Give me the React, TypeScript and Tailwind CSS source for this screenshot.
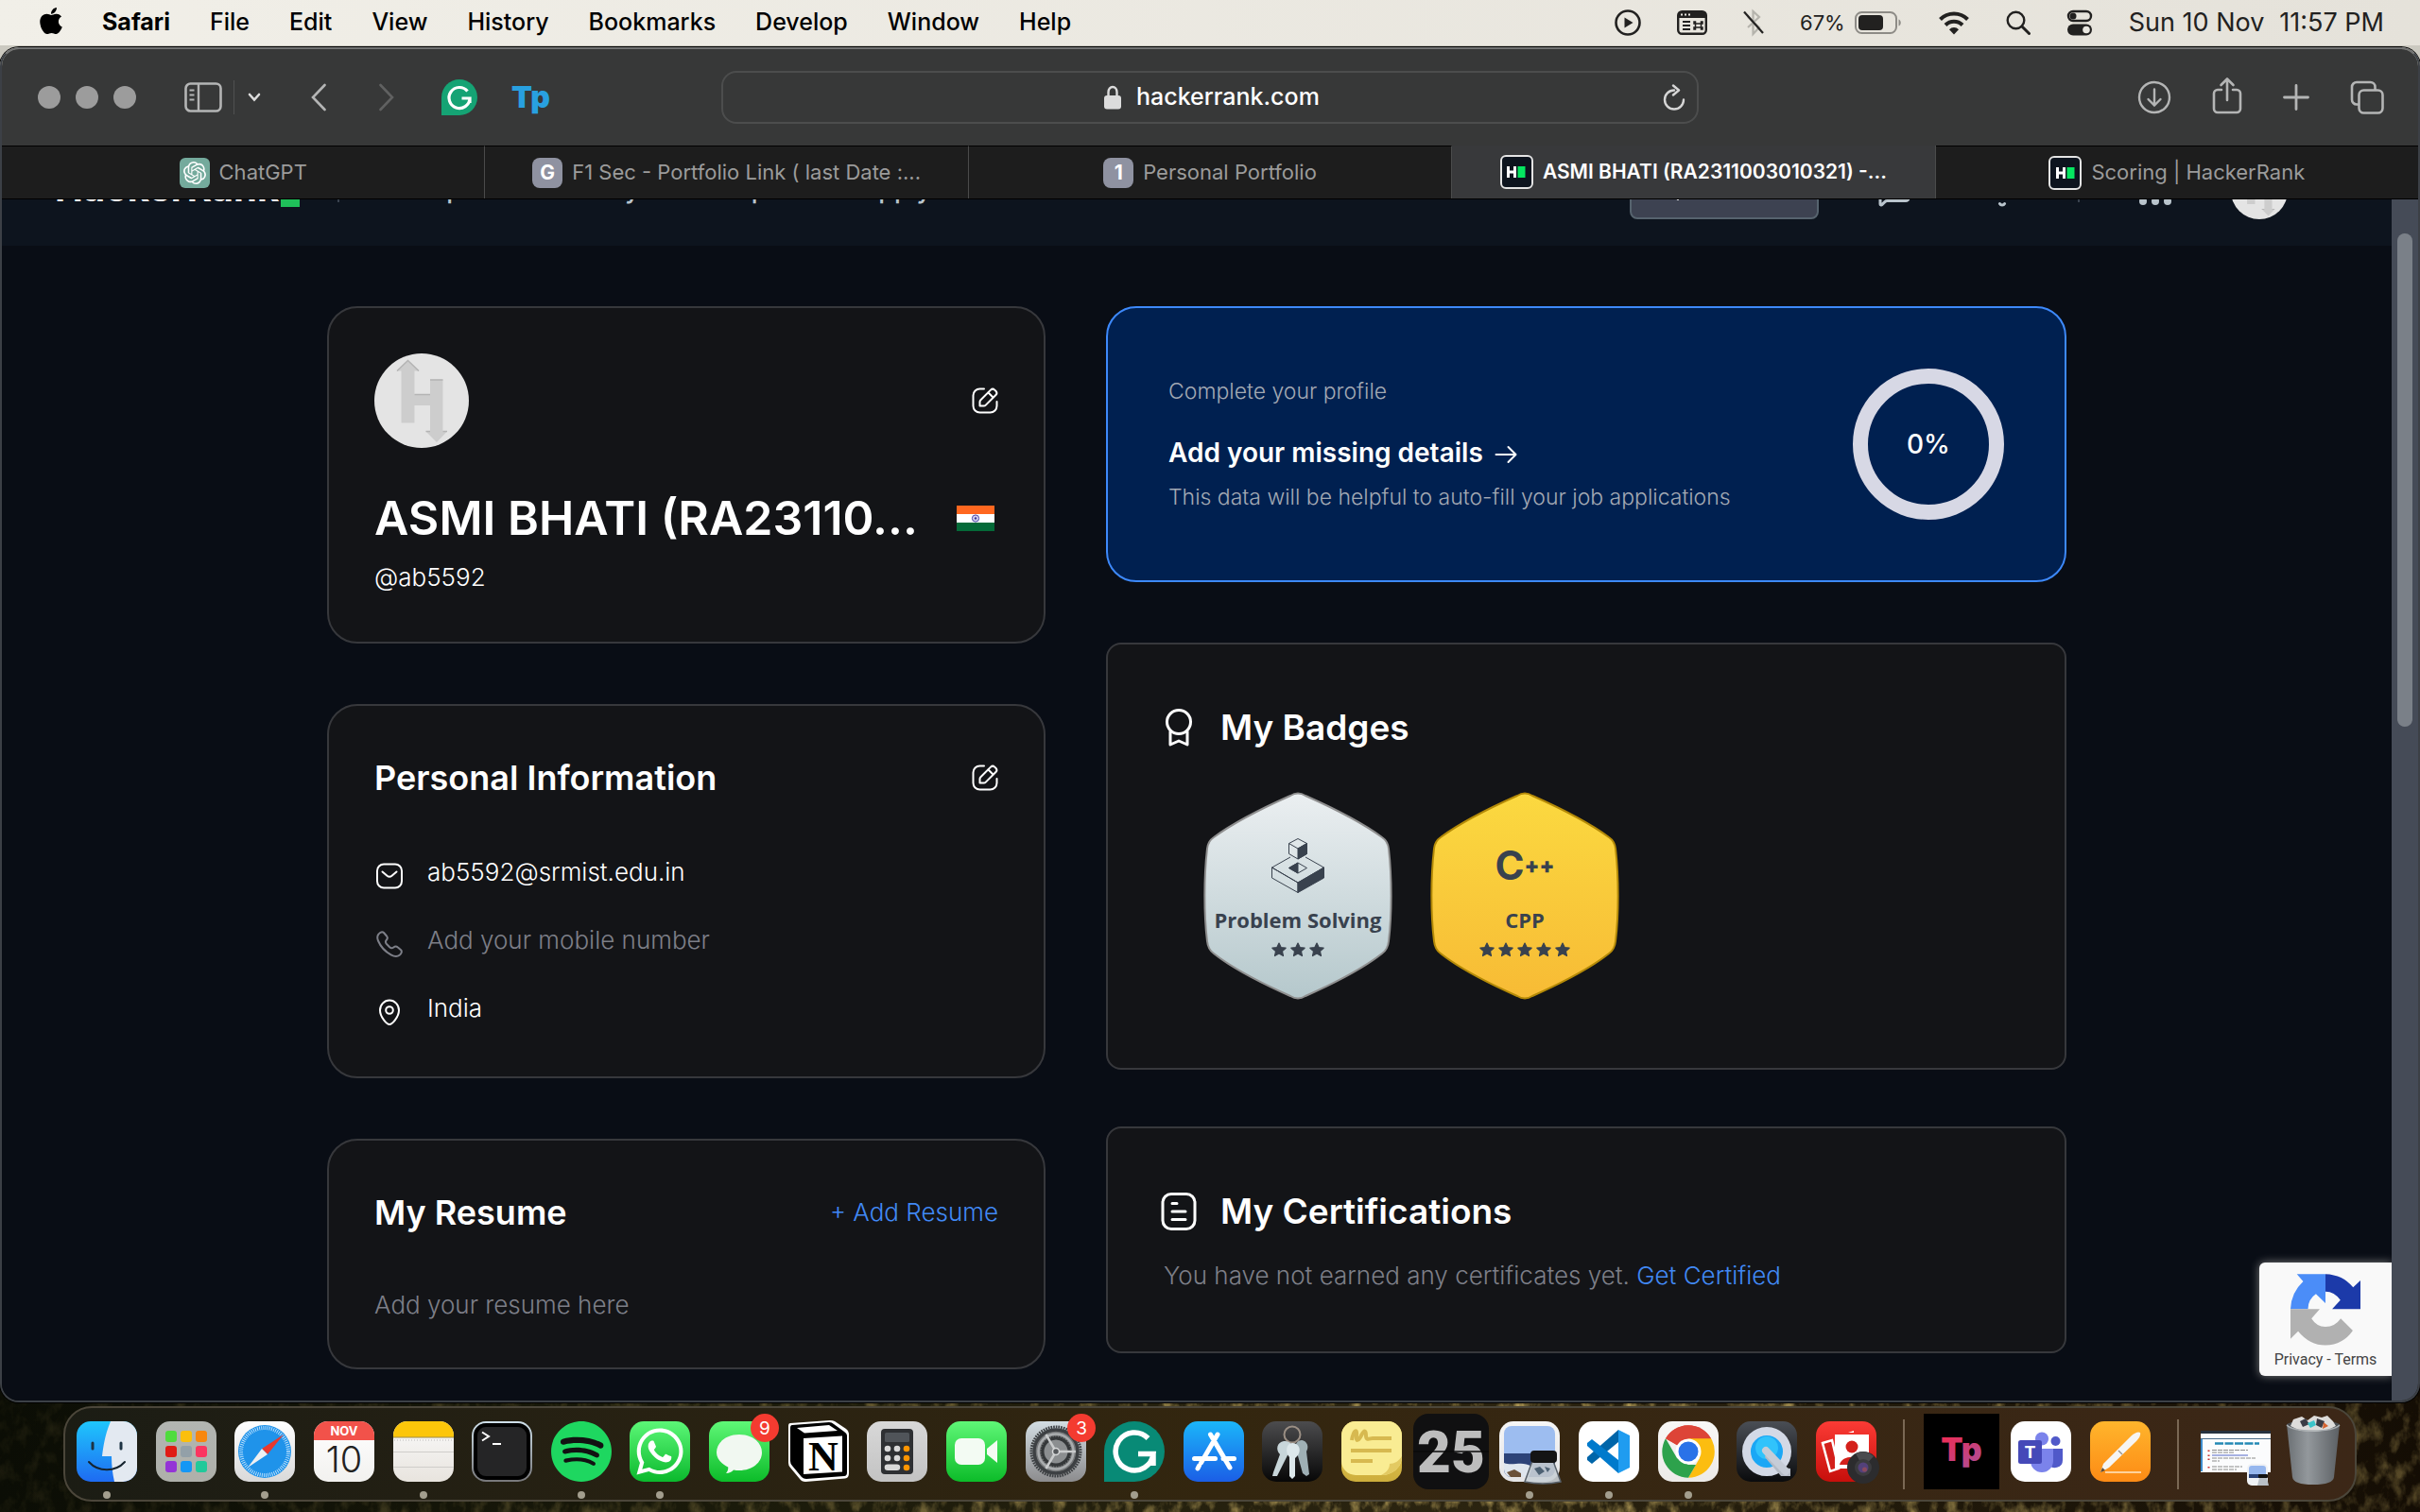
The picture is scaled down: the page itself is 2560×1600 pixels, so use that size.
import React from "react";
import { FaApple, FaWhatsapp, FaSpotify } from "react-icons/fa";
import { SiOpenai } from "react-icons/si";
import { MessageSquare, Bell, Search } from "lucide-react";

/* ---------- macOS menu bar ---------- */

const menus = ["File", "Edit", "View", "History", "Bookmarks", "Develop", "Window", "Help"];

function MenuBar() {
  return (
    <header className="flex h-12 shrink-0 items-center justify-between whitespace-nowrap bg-linear-to-r from-[#f1efe8] to-[#e5e2da] pl-[42px] pr-[38px] font-[Inter,sans-serif] text-[25px] font-medium text-black">
      <nav className="flex items-center gap-[42px]" aria-label="Application menu">
        <button aria-label="Apple menu">
          <FaApple className="-mt-1 h-8 w-6" />
        </button>
        <button className="font-bold">Safari</button>
        {menus.map((m) => (
          <button key={m}>{m}</button>
        ))}
      </nav>
      <div className="flex items-center gap-[38px] text-[#222120]">
        <svg viewBox="0 0 28 28" className="size-7" fill="none" aria-label="Now playing">
          <circle cx="14" cy="14" r="12.5" stroke="currentColor" strokeWidth="2.6" />
          <path d="M10.5 8.5v11l9-5.500z" fill="currentColor" />
        </svg>
        <svg viewBox="0 0 32 26" className="h-[26px] w-8" fill="none" aria-label="Keyboard shortcuts">
          <rect x="1.200" y="1.200" width="29.600" height="23.600" rx="4" stroke="currentColor" strokeWidth="2.400" />
          <path d="M1 5a4 4 0 0 1 4-4h22a4 4 0 0 1 4 4v3H1z" fill="currentColor" />
          <path d="M4 4.500h2M8 4.500h2M12 4.500h2" stroke="#e8e6df" strokeWidth="1.800" />
          <path d="M6 12h8M6 16h8M6 20h8" stroke="currentColor" strokeWidth="1.800" />
          <path d="M19.500 14h6v4h-6zM19.500 14h-1.500v-2h1.500zM25.500 14h1.500v-2h-1.500zM19.500 18h-1.500v2h1.500zM25.500 18h1.500v2h-1.500z" stroke="currentColor" strokeWidth="1.500" />
        </svg>
        <svg viewBox="0 0 22 30" className="h-[30px] w-[22px]" fill="none" aria-label="Bluetooth off">
          <path d="M5 9l12 11-6.500 7V3l6.500 6L5 20" stroke="#b5b3ac" strokeWidth="2.200" />
          <path d="M1 3.500l20 22.500" stroke="currentColor" strokeWidth="2.200" />
        </svg>
        <div className="flex items-center gap-2.5">
          <span className="text-[22px] font-normal">67%</span>
          <svg viewBox="0 0 50 24" className="h-6 w-[50px]" fill="none" aria-label="Battery">
            <rect x="1" y="1" width="43" height="22" rx="6.500" stroke="#8d8b86" strokeWidth="2" />
            <rect x="4" y="4" width="26" height="16" rx="4" fill="currentColor" />
            <path d="M46.500 8.500v7c3-1 3-6 0-7z" fill="#8d8b86" />
          </svg>
        </div>
        <svg viewBox="0 0 34 26" className="h-[26px] w-[34px]" fill="none" aria-label="Wi-Fi">
          <path d="M2.500 9.500a20.500 20.500 0 0 1 29 0" stroke="currentColor" strokeWidth="4" />
          <path d="M8 15.500a12.700 12.700 0 0 1 18 0" stroke="currentColor" strokeWidth="4" />
          <path d="M12 20.200a7 7 0 0 1 10 0l-5 5.300z" fill="currentColor" />
        </svg>
        <svg viewBox="0 0 26 26" className="size-[26px]" fill="none" aria-label="Spotlight">
          <circle cx="10.500" cy="10.500" r="8.800" stroke="currentColor" strokeWidth="2.400" />
          <path d="M17 17l7.500 7.500" stroke="currentColor" strokeWidth="3" strokeLinecap="round" />
        </svg>
        <svg viewBox="0 0 28 28" className="size-7" fill="none" aria-label="Control Centre">
          <rect x="2" y="2" width="24" height="10" rx="5" stroke="currentColor" strokeWidth="2.400" />
          <circle cx="7" cy="7" r="3.500" fill="currentColor" />
          <rect x="1" y="15.500" width="26" height="12" rx="6" fill="currentColor" />
          <circle cx="21" cy="21.500" r="3.800" fill="#e8e6df" />
        </svg>
        <div className="flex gap-4 text-[27px] font-normal">
          <span>Sun 10 Nov</span>
          <span>11:57 PM</span>
        </div>
      </div>
    </header>
  );
}

/* ---------- Browser chrome ---------- */

function Toolbar() {
  return (
    <div className="grid h-[102px] shrink-0 grid-cols-[1fr_1034px_1fr] items-center bg-[#373838] text-[#b4b5b5]">
      <div className="flex items-center pl-[38px]">
        <div className="flex gap-4">
          {["Close", "Minimise", "Zoom"].map((l) => (
            <button key={l} aria-label={l} className="size-6 rounded-full bg-[#9c9c9c]" />
          ))}
        </div>
        <button aria-label="Sidebar" className="ml-[51px]">
          <svg viewBox="0 0 40 32" className="h-8 w-10" fill="none" stroke="currentColor">
            <rect x="1.500" y="1.500" width="37" height="29" rx="5" strokeWidth="2.600" />
            <path d="M15 2v28" strokeWidth="2.400" />
            <path d="M5.500 8.500h5M5.500 13.500h5M5.500 18.500h5" strokeWidth="2" />
          </svg>
        </button>
        <span className="ml-3 h-9 w-px bg-[#505151]" />
        <button aria-label="Tab groups" className="ml-3.5">
          <svg viewBox="0 0 14 10" className="h-2.5 w-3.5" fill="none" stroke="#dcdcdc" strokeWidth="2.600" strokeLinecap="round">
            <path d="M2 2l5 5.500 5-5.500" />
          </svg>
        </button>
        <button aria-label="Back" className="ml-[53px]">
          <svg viewBox="0 0 16 30" className="h-[30px] w-4" fill="none" stroke="currentColor" strokeWidth="2.600" strokeLinecap="round">
            <path d="M14.500 2L2 15l12.500 13" />
          </svg>
        </button>
        <button aria-label="Forward" className="ml-14">
          <svg viewBox="0 0 16 30" className="h-[30px] w-4" fill="none" stroke="#606161" strokeWidth="2.600" strokeLinecap="round">
            <path d="M1.500 2L14 15 1.500 28" />
          </svg>
        </button>
        <button aria-label="Grammarly" className="ml-[50px]">
          <svg viewBox="0 0 38 38" className="size-[38px]" fill="none">
            <path d="M19 0a19 19 0 0 1 0 38H0V19A19 19 0 0 1 19 0z" fill="#15a374" />
            <path d="M27.500 12.500A11 11 0 1 0 30 20h-8.500M30 19v6" stroke="#fff" strokeWidth="3.200" />
          </svg>
        </button>
        <button aria-label="Typing extension" className="ml-9 font-[Inter,sans-serif] text-[32px] font-black leading-10 text-[#28a0e0]">
          Tp
        </button>
      </div>

      <div className="grid h-14 grid-cols-[1fr_auto_1fr] items-center rounded-2xl border-2 border-[#4c4d4d] px-3 font-[Inter,sans-serif] text-[25px] font-medium text-white">
        <span />
        <label className="flex items-center gap-4 pl-2">
          <svg viewBox="0 0 18 26" className="h-[26px] w-[18px]" fill="none" aria-label="Secure">
            <path d="M4.500 12V7.500a4.500 5.500 0 0 1 9 0V12" stroke="#dcdcdc" strokeWidth="2.400" />
            <rect y="11" width="18" height="14.500" rx="3" fill="#dcdcdc" />
          </svg>
          <input aria-label="Address" defaultValue="hackerrank.com" className="w-[198px] bg-transparent outline-none" />
        </label>
        <button aria-label="Reload" className="justify-self-end">
          <svg viewBox="0 0 24 28" className="h-7 w-6" fill="none" stroke="#d6d6d6" strokeWidth="2.400" strokeLinecap="round" strokeLinejoin="round">
            <path d="M12 6.500a10 10 0 1 0 10 10" />
            <path d="M11 1.500l6 5-6 5" />
          </svg>
        </button>
      </div>

      <div className="flex items-center justify-end gap-[43px] pr-9">
        <button aria-label="Downloads">
          <svg viewBox="0 0 36 36" className="size-9" fill="none" stroke="currentColor" strokeWidth="2.400" strokeLinecap="round">
            <circle cx="18" cy="18" r="16" />
            <path d="M18 9.500v17M11.500 20l6.500 6.500 6.500-6.500" />
          </svg>
        </button>
        <button aria-label="Share">
          <svg viewBox="0 0 32 40" className="-mt-1 h-10 w-8" fill="none" stroke="currentColor" strokeWidth="2.600" strokeLinecap="round" strokeLinejoin="round">
            <path d="M10 14H6a4 4 0 0 0-4 4v16a4 4 0 0 0 4 4h20a4 4 0 0 0 4-4V18a4 4 0 0 0-4-4h-4" />
            <path d="M16 25V2.500M9.500 9L16 2.500 22.500 9" />
          </svg>
        </button>
        <button aria-label="New tab">
          <svg viewBox="0 0 28 28" className="size-7" fill="none" stroke="currentColor" strokeWidth="2.800" strokeLinecap="round">
            <path d="M14 1.500v25M1.500 14h25" />
          </svg>
        </button>
        <button aria-label="Tab overview">
          <svg viewBox="0 0 36 36" className="size-9" fill="none" stroke="currentColor" strokeWidth="2.600">
            <rect x="9.500" y="10.500" width="25" height="24" rx="5" />
            <path d="M9.500 25.500H7a5 5 0 0 1-5-5V7a5 5 0 0 1 5-5h14.500a5 5 0 0 1 5 5v3.500" />
          </svg>
        </button>
      </div>
    </div>
  );
}

function HrFavicon() {
  return (
    <span className="flex h-9 w-[35px] items-center justify-center rounded-md border-2 border-[#e4e4e4] bg-[#0d141e]">
      <svg viewBox="0 0 20 12" className="h-3 w-5">
        <path d="M1.500 0v12M8.500 0v12M1.500 6h7" stroke="#fff" strokeWidth="3" />
        <rect x="11.500" width="8" height="12" fill="#05e660" />
      </svg>
    </span>
  );
}

function LetterFavicon({ children }: { children: string }) {
  return (
    <span className="flex size-8 items-center justify-center rounded-lg bg-[#8f92a1] text-[21px] font-bold text-white">
      {children}
    </span>
  );
}

const tabs: { title: string; icon: React.ReactNode; active?: boolean }[] = [
  {
    title: "ChatGPT",
    icon: (
      <span className="flex size-8 items-center justify-center rounded-md bg-[#74aa9c] text-white">
        <SiOpenai className="size-6" />
      </span>
    ),
  },
  { title: "F1 Sec - Portfolio Link ( last Date :...", icon: <LetterFavicon>G</LetterFavicon> },
  { title: "Personal Portfolio", icon: <LetterFavicon>1</LetterFavicon> },
  { title: "ASMI BHATI (RA2311003010321) -...", icon: <HrFavicon />, active: true },
  { title: "Scoring | HackerRank", icon: <HrFavicon /> },
];

function TabBar() {
  return (
    <div role="tablist" className="flex h-[57px] shrink-0 border-b border-black font-[Inter,sans-serif]">
      {tabs.map((t) => (
        <button
          key={t.title}
          role="tab"
          aria-selected={!!t.active}
          className={
            t.active
              ? "flex flex-1 items-center justify-center gap-2.5 whitespace-nowrap border-r border-[#4a4b4b] bg-[#38393b] text-[21px] font-semibold text-white"
              : "flex flex-1 items-center justify-center gap-2.5 whitespace-nowrap border-r border-t border-r-[#4a4b4b] border-t-black bg-[#1d1d1d] text-[22px] text-[#9b9b9b] last:border-r-0"
          }
        >
          {t.icon}
          {t.title}
        </button>
      ))}
    </div>
  );
}

/* ---------- Site ---------- */

function SiteHeader() {
  return (
    <div className="overflow-hidden bg-[#0d141e]">
      <div className="-mt-[67px] flex h-[116px] items-center justify-between pl-14 pr-[110px]">
        <div className="flex items-center text-[27px] font-medium text-[#b9c4cc]">
          <a href="#" className="-mt-1.5 flex items-end text-[40px] font-bold text-white">
            HackerRank
            <span className="mb-2.5 ml-0.5 h-7 w-5 bg-[#1fc05a]" />
          </a>
          <span className="ml-10 h-6 w-0.5 bg-[#39424e]" />
          <nav className="-mt-0.5 ml-[70px] flex gap-[58px]">
            {["Prepare", "Certify", "Compete", "Apply"].map((l) => (
              <a key={l} href="#">{l}</a>
            ))}
          </nav>
        </div>
        <div className="flex items-center gap-[62px] text-[#b9c4cc]">
          <button aria-label="Search" className="flex h-[60px] w-[200px] items-center rounded-lg border-2 border-[#56636e] bg-[#3d4251] pl-7 text-white">
            <Search className="size-6" />
          </button>
          <button aria-label="Messages" className="mr-4">
            <MessageSquare className="size-9" />
          </button>
          <button aria-label="Notifications">
            <Bell className="size-9" />
          </button>
          <span className="h-6 w-0.5 bg-[#39424e]" />
          <button aria-label="Products">
            <svg viewBox="0 0 36 32" className="h-8 w-9" fill="currentColor">
              {[5, 16, 27].map((y) => [5, 18, 31].map((x) => <circle key={`${x}-${y}`} cx={x} cy={y} r="4" />))}
            </svg>
          </button>
          <button aria-label="Account">
            <Avatar className="size-[60px]" />
          </button>
        </div>
      </div>
    </div>
  );
}

function Avatar({ className }: { className: string }) {
  return (
    <svg viewBox="0 0 100 100" className={className} aria-label="Profile picture">
      <circle cx="50" cy="50" r="50" fill="#e4e4e4" />
      <path
        d="M35.500 7.500L47 18.500H42.500V43.500H59V27.500H72.500V82.500H77L66 94 54.500 82.500H59V55H42.500V73.500H28.500V18.500H24z"
        fill="#cdcdcd"
      />
      <path d="M24 18.500L35.500 7.500 47 18.500M42.500 43.500H59M59 28H72.500M54.500 82.500H59M72.500 82.500H77" stroke="#b4b4b4" strokeWidth="1.500" fill="none" />
    </svg>
  );
}

function EditButton({ label }: { label: string }) {
  return (
    <button aria-label={label}>
      <svg viewBox="0 0 28 28" className="size-7" fill="none" stroke="#fff" strokeWidth="2" strokeLinecap="round" strokeLinejoin="round">
        <path d="M13 1.500H8.500a7 7 0 0 0-7 7v11a7 7 0 0 0 7 7h11a7 7 0 0 0 7-7V15" />
        <path d="M8.500 19.500v-4.200a3 3 0 0 1 .9-2.100L20 2.600a3 3 0 0 1 4.200 0l1.200 1.200a3 3 0 0 1 0 4.200L14.800 18.600a3 3 0 0 1-2.100.900z" />
        <path d="M17.500 5.500l5 5" />
      </svg>
    </button>
  );
}

const card = "rounded-[32px] border-2 border-[#37383c] bg-[#131417] p-12";

function ProfileCard() {
  return (
    <section className={card}>
      <div className="flex items-center justify-between">
        <Avatar className="size-[100px]" />
        <EditButton label="Edit profile" />
      </div>
      <div className="mt-10 flex items-center justify-between pr-1">
        <h1 className="whitespace-nowrap text-[50px] font-semibold leading-[68px]">ASMI BHATI (RA23110...</h1>
        <svg viewBox="0 0 40 27" className="h-[27px] w-10" aria-label="India">
          <rect width="40" height="9" fill="#ff671f" />
          <rect y="9" width="40" height="9" fill="#fff" />
          <rect y="18" width="40" height="9" fill="#046a38" />
          <circle cx="20" cy="13.500" r="3.600" fill="#d5d3ee" stroke="#4a44a8" strokeWidth="1" />
          <circle cx="20" cy="13.500" r="1.200" fill="#3d3799" />
        </svg>
      </div>
      <p className="mb-0.5 mt-[11px] text-[26px] font-light leading-9">@ab5592</p>
    </section>
  );
}

function PersonalCard() {
  const icon = "mt-2 size-7 shrink-0";
  return (
    <section className={card}>
      <div className="flex items-center justify-between">
        <h2 className="text-[36px] font-semibold leading-[56px]">Personal Information</h2>
        <EditButton label="Edit personal information" />
      </div>
      <ul className="mb-1.5 mt-[54px] space-y-9 pl-0.5 text-[26px] font-light leading-9">
        <li className="flex gap-[26px]">
          <svg viewBox="0 0 28 28" className={icon} fill="none" stroke="currentColor" strokeWidth="2" strokeLinecap="round" strokeLinejoin="round">
            <rect x="1" y="1.500" width="26" height="25" rx="7" />
            <path d="M6.500 9.500l5 4.300a4 4 0 0 0 5 0l5-4.300" />
          </svg>
          <span>ab5592@srmist.edu.in</span>
        </li>
        <li className="flex gap-[26px] text-[#7d7f88]">
          <svg viewBox="0 0 28 28" className={icon} fill="none" stroke="currentColor" strokeWidth="2" strokeLinejoin="round">
            <path d="M2.500 3.500C4 1.500 6.500.500 8 2l3 3.500c1.200 1.500 1 3-.2 4.300-1.300 1.400-1.300 2.500.2 4.200l3.200 3.300c1.500 1.400 2.700 1.400 4.100.2 1.400-1.200 3-1.400 4.300-.2l3.500 3c1.500 1.500.500 4-1.500 5.500-2.500 1.800-5.500 1.500-9-.500C9.500 22 4.500 16.500 2 10.500.800 7.500.800 5.500 2.500 3.500z" />
          </svg>
          <span>Add your mobile number</span>
        </li>
        <li className="flex gap-[26px]">
          <svg viewBox="0 0 28 28" className={icon} fill="none" stroke="currentColor" strokeWidth="2" strokeLinejoin="round">
            <path d="M14 27c-2.500 0-10-7.500-10-15a10 10.500 0 0 1 20 0c0 7.500-7.500 15-10 15z" />
            <circle cx="14" cy="12" r="3.800" />
          </svg>
          <span>India</span>
        </li>
      </ul>
    </section>
  );
}

function ResumeCard() {
  return (
    <section className={card}>
      <div className="flex items-center justify-between">
        <h2 className="text-[36px] font-semibold leading-[56px]">My Resume</h2>
        <button className="text-[26px] font-light leading-9 text-[#4189f5]">+ Add Resume</button>
      </div>
      <p className="mt-[52px] text-[26px] font-light leading-9 text-[#7d7f88]">Add your resume here</p>
    </section>
  );
}

function CompleteCard() {
  return (
    <section className="flex items-center justify-between rounded-[32px] border-2 border-[#3d89fb] bg-[#002050] px-16 py-[72px]">
      <div className="text-[23px] font-light leading-8 text-[#a3a9b4]">
        <p>Complete your profile</p>
        <a href="#" className="mt-[31px] flex items-center gap-3 text-[28px] font-semibold leading-9 text-white">
          Add your missing details
          <svg viewBox="0 0 24 20" className="mt-1 h-5 w-6" fill="none" stroke="#fff" strokeWidth="2" strokeLinecap="round" strokeLinejoin="round">
            <path d="M1.500 10h21M14.500 2l8 8-8 8" />
          </svg>
        </a>
        <p className="mt-[13px]">This data will be helpful to auto-fill your job applications</p>
      </div>
      <div role="progressbar" aria-valuenow={0} aria-label="Profile completion" className="-my-2 flex size-40 items-center justify-center rounded-full border-16 border-[#d7d8e5] text-[28px] font-medium">
        0%
      </div>
    </section>
  );
}

function Badge({ label, stars, from, to, edge, id, children }: { label: string; stars: number; from: string; to: string; edge: string; id: string; children: React.ReactNode }) {
  return (
    <li className="relative flex h-[220px] w-[200px] flex-col items-center text-[#39424e]">
      <svg viewBox="0 0 200 220" className="absolute inset-0 size-full">
        <defs>
          <linearGradient id={id} x1="0" y1="0" x2="0" y2="1">
            <stop offset="0" stopColor={from} />
            <stop offset="1" stopColor={to} />
          </linearGradient>
        </defs>
        <path
          d="M92 4Q100-1 108 4C135 16 170 34 189 48Q195 52 196 60C199.500 90 199.500 130 196 158Q195 167 189 171C170 186 135 204 108 216Q100 221 92 216C65 204 30 186 11 171Q5 167 4 158C.500 130 .500 90 4 60Q5 52 11 48C30 34 65 16 92 4z"
          fill={`url(#${id})`}
          stroke={edge}
          strokeWidth="2"
        />
      </svg>
      <div className="relative mt-12 flex h-[60px] items-center justify-center">{children}</div>
      <span className="relative mt-[11px] whitespace-nowrap font-['Open_Sans',sans-serif] text-[22px] font-bold leading-8">{label}</span>
      <span className="relative mt-2 flex gap-1">
        {Array.from({ length: stars }, (_, i) => (
          <svg key={i} viewBox="0 0 24 24" className="size-4" fill="currentColor" stroke="currentColor" strokeWidth="1.800" strokeLinejoin="round">
            <path d="M12 1.500l3.200 6.900 7.500.900-5.500 5.100 1.500 7.400L12 18.100l-6.700 3.700 1.500-7.400L1.300 9.300l7.500-.900z" />
          </svg>
        ))}
      </span>
    </li>
  );
}

const wideCard = "rounded-2xl border-2 border-[#37383c] bg-[#131417] pl-[55px] pr-[55px] pt-[60px]";

function BadgesCard() {
  return (
    <section className={`${wideCard} pb-[72px]`}>
      <h2 className="flex items-center gap-6 text-[37px] font-semibold leading-[56px]">
        <svg viewBox="0 0 40 40" className="size-10" fill="none" stroke="#fff" strokeWidth="3" strokeLinejoin="round">
          <circle cx="20" cy="14" r="12.500" />
          <path d="M11 23.500v14.500l9-4 9 4V23.500" />
        </svg>
        My Badges
      </h2>
      <ul className="ml-[46px] mt-10 flex gap-10">
        <Badge id="silver" label="Problem Solving" stars={3} from="#ebeff1" to="#b5c8cc" edge="#8f8f8f">
          <svg viewBox="0 0 56 58" className="h-[58px] w-14" fill="none" stroke="#39424e" strokeWidth="1" strokeLinejoin="round">
            <path d="M.500 31L28 47v10.500L.500 42z" />
            <path d="M55.500 31L28 47v10.500L55.500 42z" fill="#39424e" />
            <path d="M20 20L.500 31 28 47 55.500 31 36 20" />
            <path d="M28 26l9.500 5.500L28 37l-9.500-5.500z" />
            <path d="M28 26v11l-9.500-5.500z" fill="#39424e" />
            <path d="M28 .500l9.500 5v11L28 22l-9.500-5.500v-11z" fill="#e0e7e9" />
            <path d="M18.500 5.500L28 11l9.500-5.500" />
            <path d="M28 11l9.500-5.500v11L28 22z" fill="#39424e" />
          </svg>
        </Badge>
        <Badge id="gold" label="CPP" stars={5} from="#fbd940" to="#f7bb35" edge="#b48a07">
          <span className="text-[42px] font-bold leading-[60px]">C</span>
          <span className="text-[23px] font-black leading-[60px]">++</span>
        </Badge>
      </ul>
    </section>
  );
}

function CertificationsCard() {
  return (
    <section className={`${wideCard} pb-[62px]`}>
      <h2 className="flex items-center gap-6 text-[37px] font-semibold leading-[56px]">
        <svg viewBox="0 0 40 40" className="size-10" fill="none" stroke="#fff" strokeWidth="3" strokeLinecap="round">
          <rect x="3" y="1.500" width="34" height="37" rx="9" />
          <path d="M13 11.500h5M13 20h14M13 28.500h14" />
        </svg>
        My Certifications
      </h2>
      <p className="mt-[22px] pl-1 text-[26px] font-light leading-9 text-[#7d7f88]">
        You have not earned any certificates yet. <a href="#" className="text-[#4189f5]">Get Certified</a>
      </p>
    </section>
  );
}

function Recaptcha() {
  return (
    <aside className="absolute bottom-[26px] right-0 flex h-[120px] w-[140px] flex-col items-center rounded-l-md bg-[#f9f9f9] pt-3 font-[Roboto,sans-serif] text-[16px] leading-5 text-[#444] shadow-[0_0_10px_#808080]">
      <svg viewBox="0 0 220 225" className="h-[76px] w-[74px]" aria-label="reCAPTCHA">
        <path d="M20 0H110V92L80 63Q55 80 55 110H0Q2 58 40 23z" fill="#4b8df8" />
        <path d="M110 0Q165 2 197 42L220 20V110H131L157 82Q138 55 110 55z" fill="#1c3aa9" />
        <path d="M0 110H92L66 140Q82 166 110 166 140 166 158 140L196 178Q165 223 110 224 60 224 24 180L0 204z" fill="#b1b1b1" />
      </svg>
      <p className="mt-[5px] whitespace-nowrap">
        <a href="#">Privacy</a> - <a href="#">Terms</a>
      </p>
    </aside>
  );
}

function Page() {
  return (
    <div className="flex min-h-0 flex-1 font-[Inter,sans-serif] text-white">
      <main className="relative min-w-0 flex-1 overflow-hidden bg-[#090d15]">
        <SiteHeader />
        <div className="mx-auto mt-16 grid max-w-[1840px] grid-cols-[760fr_1016fr] items-start gap-16">
          <div className="flex flex-col gap-16">
            <ProfileCard />
            <PersonalCard />
            <ResumeCard />
          </div>
          <div className="flex flex-col">
            <CompleteCard />
            <div className="mt-16 flex flex-col gap-[60px]">
              <BadgesCard />
              <CertificationsCard />
            </div>
          </div>
        </div>
        <Recaptcha />
      </main>
      <div className="w-7 shrink-0 bg-[#454b57] pt-9">
        <div className="mx-auto h-[522px] w-4 rounded-full bg-[#7a8088]" />
      </div>
    </div>
  );
}

/* ---------- Dock ---------- */

function Tile({ id, from, to, children }: { id: string; from: string; to: string; children?: React.ReactNode }) {
  return (
    <svg viewBox="0 0 80 80" className="size-20 overflow-visible">
      <defs>
        <linearGradient id={id} x1="0" y1="0" x2="0" y2="1">
          <stop offset="0" stopColor={from} />
          <stop offset="1" stopColor={to} />
        </linearGradient>
        <clipPath id={`${id}-clip`}>
          <rect x="8" y="8" width="64" height="64" rx="15" />
        </clipPath>
      </defs>
      <rect x="8" y="8" width="64" height="64" rx="15" fill={`url(#${id})`} />
      {children}
    </svg>
  );
}

function Count({ n }: { n: string }) {
  return (
    <>
      <circle cx="67" cy="15" r="15" fill="#f43b30" />
      <text x="67" y="22" textAnchor="middle" fontFamily="Inter" fontSize="19" fill="#fff">{n}</text>
    </>
  );
}

const padColors = ["#4fdc3d", "#fbbf0d", "#f7870f", "#e01b14", "#93a0a8", "#fb3560", "#9434d6", "#1497f5", "#20c99a"];

const apps: { name: string; running?: boolean; icon: React.ReactNode }[] = [
  {
    name: "Finder", running: true,
    icon: (
      <Tile id="finder" from="#1fc6fc" to="#1e6bf2">
        <path d="M44 8C38 22 36 36 35 45h10c0 10 1 18 3 27h30V8z" fill="#e3e9f1" clipPath="url(#finder-clip)" />
        <path d="M25 31v6M55 31v6" stroke="#1d3243" strokeWidth="3" strokeLinecap="round" />
        <path d="M21 51c10 11 28 11 38 0" stroke="#15232e" strokeWidth="2" fill="none" strokeLinecap="round" />
      </Tile>
    ),
  },
  {
    name: "Launchpad",
    icon: (
      <Tile id="launchpad" from="#b2b5b1" to="#aeb0aa">
        {padColors.map((c, i) => (
          <rect key={c} x={18 + (i % 3) * 16} y={18 + Math.floor(i / 3) * 16} width="12" height="12" rx="3" fill={c} />
        ))}
      </Tile>
    ),
  },
  {
    name: "Safari", running: true,
    icon: (
      <Tile id="safari" from="#ffffff" to="#d9d9d9">
        <circle cx="40" cy="40" r="28" fill="#1f93ea" />
        <circle cx="40" cy="40" r="25" fill="none" stroke="#d4ecff" strokeWidth="4" strokeDasharray="0.800 1.380" />
        <path d="M60 22L43 43l-6-6z" fill="#e8382e" />
        <path d="M22 57l15-20 6 6z" fill="#eef0f2" />
      </Tile>
    ),
  },
  {
    name: "Calendar",
    icon: (
      <Tile id="calendar" from="#ffffff" to="#f2f1ef">
        <rect x="8" y="8" width="64" height="20" fill="#f2524a" clipPath="url(#calendar-clip)" />
        <text x="40" y="23" textAnchor="middle" fontFamily="Inter" fontWeight="700" fontSize="13" fill="#fff">NOV</text>
        <text x="40" y="62" textAnchor="middle" fontFamily="Inter" fontWeight="300" fontSize="38" fill="#222">10</text>
      </Tile>
    ),
  },
  {
    name: "Notes", running: true,
    icon: (
      <Tile id="notes" from="#fafafa" to="#e8e4de">
        <rect x="8" y="8" width="64" height="17" fill="#fcc60a" clipPath="url(#notes-clip)" />
        <path d="M8 25h64" stroke="#9c8a4b" strokeWidth="1" />
        <path d="M9 28h62" stroke="#b9b9b9" strokeWidth="1" strokeDasharray="1 2" />
        <path d="M8 40.500h64M8 56.500h64" stroke="#cfcdca" strokeWidth="1" />
      </Tile>
    ),
  },
  {
    name: "Terminal",
    icon: (
      <Tile id="terminal" from="#cfe0ea" to="#77777a">
        <rect x="10" y="10" width="60" height="60" rx="13" fill="#000" />
        <rect x="14" y="14" width="52" height="52" rx="9" fill="#252526" />
        <path d="M19 19.500l7 4.500-7 4.500M30 32h9" stroke="#fff" strokeWidth="2" fill="none" />
      </Tile>
    ),
  },
  {
    name: "Spotify", running: true,
    icon: (
      <div className="flex size-20 items-center justify-center">
        <span className="flex size-[62px] items-center justify-center rounded-full bg-[#121212] text-[#1ed760]">
          <FaSpotify className="size-[66px] shrink-0" />
        </span>
      </div>
    ),
  },
  {
    name: "WhatsApp", running: true,
    icon: (
      <Tile id="whatsapp" from="#5cf777" to="#0bb92d">
        <g transform="translate(12 12)" color="#fff"><FaWhatsapp size={56} /></g>
      </Tile>
    ),
  },
  {
    name: "Messages",
    icon: (
      <Tile id="messages" from="#5ff777" to="#0cbc29">
        <path d="M40 22c14 0 24 8.500 24 19s-10 19-24 19c-2 0-4 0-6-.600-2 2-4.500 3.400-8 3.600 1.500-2 2.500-4 2.200-6.400C21 53 16 47.500 16 41c0-10.500 10-19 24-19z" fill="#f1f8f1" />
        <Count n="9" />
      </Tile>
    ),
  },
  {
    name: "Notion",
    icon: (
      <svg viewBox="0 0 80 80" className="size-20">
        <path d="M10 10l42-3q3 0 5 1l12 8q3 2 3 5v42q0 5-4 5.500L26 72q-4 0-6-3L10 57q-2-2-2-5V13q0-3 2-3z" fill="#fff" />
        <path d="M12 12l39-3q3 0 5 2l11 8q3 2 3 4v39q0 4-3 4l-40 3q-3 0-5-2L12 55q-2-2-2-5V15q0-3 2-3z" fill="#000" />
        <path d="M17 15l34-3 9 6-35 2.500z" fill="#fff" />
        <path d="M24 26l41-2.500v38L24 64z" fill="#fff" />
        <text x="45" y="60" textAnchor="middle" fontFamily="Liberation Serif" fontWeight="700" fontSize="44" fill="#000">N</text>
      </svg>
    ),
  },
  {
    name: "Calculator",
    icon: (
      <Tile id="calculator" from="#d8d8d8" to="#c3c3c3">
        <rect x="23" y="16" width="34" height="48" rx="4" fill="#2e3033" />
        <rect x="27" y="20" width="26" height="10" rx="1.500" fill="#505459" />
        {[0, 1, 2, 3, 4, 5].map((i) => (
          <circle key={i} cx={30 + (i % 3) * 10} cy={37 + Math.floor(i / 3) * 10} r="3.300" fill={i % 3 === 2 ? "#ff9500" : "#d9d9d9"} />
        ))}
        <rect x="26.700" y="53.500" width="16.500" height="6.600" rx="3.300" fill="#d9d9d9" />
        <circle cx="50" cy="57" r="3.300" fill="#ff9500" />
      </Tile>
    ),
  },
  {
    name: "FaceTime",
    icon: (
      <Tile id="facetime" from="#5ff777" to="#0cbc29">
        <rect x="17" y="26" width="32" height="28" rx="7" fill="#f3fbf3" />
        <path d="M51 37l11-9v24l-11-9z" fill="#f3fbf3" strokeLinejoin="round" />
      </Tile>
    ),
  },
  {
    name: "System Settings",
    icon: (
      <Tile id="settings" from="#d3dde2" to="#8c8c8e">
        <circle cx="40" cy="40" r="26" fill="none" stroke="#3d4043" strokeWidth="3" strokeDasharray="1.700 1" />
        <circle cx="40" cy="40" r="23" fill="#77797b" stroke="#3d4043" strokeWidth="3.500" />
        <circle cx="40" cy="40" r="18.500" fill="none" stroke="#a9acae" strokeWidth="2.500" />
        <circle cx="40" cy="40" r="14" fill="#8b8e90" stroke="#35383a" strokeWidth="3" />
        <circle cx="40" cy="40" r="15.500" fill="none" stroke="#35383a" strokeWidth="2" strokeDasharray="1.700 1" />
        <path d="M40 40h21M40 40L29.500 22M40 40L29.500 58" stroke="#c9cbcc" strokeWidth="2.500" />
        <circle cx="40" cy="40" r="3.500" fill="#55585b" stroke="#d6d8d9" strokeWidth="1.500" />
        <Count n="3" />
      </Tile>
    ),
  },
  {
    name: "Grammarly", running: true,
    icon: (
      <svg viewBox="0 0 80 80" className="size-20">
        <path d="M40 8a32 32 0 0 1 0 64H8V40A32 32 0 0 1 40 8z" fill="#088a76" />
        <path d="M54.500 26A20 20 0 1 0 60 42.500H44M60 42v13" stroke="#fff" strokeWidth="5.500" fill="none" />
      </svg>
    ),
  },
  {
    name: "App Store",
    icon: (
      <Tile id="appstore" from="#1bb6fa" to="#1b5ee6">
        <path d="M44 22L26.500 52M36.500 22L57 57M19.500 47.500h22M50 47.500h11.500M24.500 55L23 58" stroke="#fff" strokeWidth="5" strokeLinecap="round" />
      </Tile>
    ),
  },
  {
    name: "Keychain Access",
    icon: (
      <Tile id="keychain" from="#4c4c4e" to="#070707">
        <circle cx="40" cy="22" r="8.500" fill="none" stroke="#9b8f84" strokeWidth="2" />
        <path d="M50 28c6 1 8 7 5 12l3 24-3 2-4-3-6-22c-4-5-1-13 5-13z" fill="#9fb0b5" />
        <path d="M31 29c7-1 11 5 9 11l-5 4-11 22h-5l1-4 7-19c-5-5-3-13 4-14z" fill="#c8d6da" />
        <path d="M40 31c7 0 10 7 6 13l-3 3v19l-3 3-3-3V46c-5-6-3-15 3-15z" fill="#dde8eb" />
      </Tile>
    ),
  },
  {
    name: "Stickies",
    icon: (
      <Tile id="stickies" from="#e8cf5c" to="#cdae3c">
        <path d="M8 23A15 15 0 0 1 23 8h34a15 15 0 0 1 15 15v22c0 12-10 20-22 20H23A15 15 0 0 1 8 50z" fill="#f9ec93" />
        <path d="M72 45c0 12-10 20-22 20 6-3 9-7 9-12 5 0 10-3 13-8z" fill="#e3ca62" />
        <path d="M19 28c2-12 6-12 5-5s2 6 5 0 5-6 5 0 4 3 7 3h20M18 39h43M18 50h23" stroke="#d7b950" strokeWidth="4" fill="none" />
      </Tile>
    ),
  },
  {
    name: "Flip Clock",
    icon: (
      <svg viewBox="0 0 80 80" className="size-20">
        <rect width="80" height="80" rx="16" fill="#101011" />
        <text x="40" y="62" textAnchor="middle" fontFamily="Roboto" fontWeight="900" fontSize="62" fill="#bdbdbd">25</text>
        <path d="M0 40h80" stroke="#0a0a0a" strokeWidth="1.500" />
      </svg>
    ),
  },
  {
    name: "Preview", running: true,
    icon: (
      <Tile id="preview" from="#f6f6f6" to="#e4e4e6">
        <rect x="13" y="13" width="54" height="54" rx="8" fill="#9dbdf0" />
        <path d="M13 42h54v17a8 8 0 0 1-8 8H21a8 8 0 0 1-8-8z" fill="#2d4378" />
        <path d="M13 52c10 4 18-3 30 4l-4 11H21a8 8 0 0 1-8-8z" fill="#dfe6ee" />
        <path d="M16 62l8-3 7 4v4H20z" fill="#6b5139" />
        <path d="M43 50h22l8 22q-19 4-38 0z" fill="#c9d0d6" fillOpacity=".9" stroke="#59626b" strokeWidth="1.500" />
        <path d="M45 58l6-2 5 5-6 4zM56 56l6 2-3 4z" fill="#4d6173" />
        <rect x="41" y="39" width="28" height="13" rx="4" fill="#141414" />
      </Tile>
    ),
  },
  {
    name: "Visual Studio Code", running: true,
    icon: (
      <Tile id="vscode" from="#ffffff" to="#ffffff">
        <path d="M50 17v13L22 53l-5-4v-3z" fill="#0065a9" />
        <path d="M50 63V49L22 27l-5 4v3z" fill="#007acc" />
        <path d="M50 17l12 6v34l-12 6z" fill="#1f9cf0" />
      </Tile>
    ),
  },
  {
    name: "Chrome", running: true,
    icon: (
      <Tile id="chrome" from="#f8f7f6" to="#eceae8">
        <path d="M40 40L16 26.200A27.700 27.700 0 0 1 64 26.200z" fill="#dd4437" />
        <path d="M40 26h24a27.700 27.700 0 0 1-24 41.700l12-20.700z" fill="#fcbd10" />
        <path d="M16 26.200l12 20.700L40 54h8l-8 13.700A27.700 27.700 0 0 1 16 26.200z" fill="#2da24c" />
        <path d="M16 26.200A27.700 27.700 0 0 1 64 26.200H40v14z" fill="#dd4437" />
        <circle cx="40" cy="40" r="13.500" fill="#fff" />
        <circle cx="40" cy="40" r="10.500" fill="#2a72e8" />
      </Tile>
    ),
  },
  {
    name: "QuickTime Player",
    icon: (
      <Tile id="quicktime" from="#4a4e55" to="#0a0b0d">
        <circle cx="40" cy="40" r="21.500" fill="#1ba7f5" stroke="#d3d9e6" strokeWidth="9" />
        <circle cx="40" cy="36" r="12" fill="#31c3fb" />
        <path d="M40 40l18 17 7 1v8h-10L38 46z" fill="#b4bac5" />
        <path d="M39 39l21 22" stroke="#c6ccd7" strokeWidth="8" strokeLinecap="round" />
      </Tile>
    ),
  },
  {
    name: "Photo Booth",
    icon: (
      <Tile id="photobooth" from="#fb3b35" to="#c70f0b">
        <path d="M15 31l10-3 7 30-9 3z" fill="#d4201b" stroke="#fff" strokeWidth="2.500" />
        <path d="M28 22h36v36H28zM42 20l6-2v2z" fill="#fff" />
        <circle cx="46" cy="35" r="6.500" fill="#d4201b" />
        <path d="M33 54c2-11 24-11 26 0z" fill="#d4201b" />
        <circle cx="58" cy="57" r="17" fill="#2c2c2e" />
        <path d="M58 57L50 42a17 17 0 0 1 19 3z" fill="#4b4b4e" />
        <circle cx="58" cy="57" r="9" fill="#3b3b3e" />
        <circle cx="58" cy="57" r="5.500" fill="#53417a" />
        <circle cx="59.500" cy="59" r="2.500" fill="#8a4a5f" />
      </Tile>
    ),
  },
];

const extras: { name: string; icon: React.ReactNode }[] = [
  {
    name: "Tp",
    icon: (
      <svg viewBox="0 0 80 80" className="size-20">
        <defs>
          <linearGradient id="tp" x1="0" y1="0" x2="1" y2="1">
            <stop offset="0" stopColor="#f8284b" />
            <stop offset="1" stopColor="#a8509c" />
          </linearGradient>
        </defs>
        <rect width="80" height="80" fill="#000" />
        <text x="40" y="50" textAnchor="middle" fontFamily="Inter" fontWeight="900" fontSize="34" fill="url(#tp)">Tp</text>
      </svg>
    ),
  },
  {
    name: "Teams",
    icon: (
      <Tile id="teams" from="#ffffff" to="#ffffff">
        <circle cx="41" cy="26.500" r="7" fill="#7b83eb" />
        <circle cx="55.500" cy="29" r="5" fill="#5059c9" />
        <path d="M48 37h15v12a8 8 0 0 1-15 4z" fill="#5059c9" />
        <path d="M29 37h24v13a12 12 0 0 1-24 0z" fill="#7b83eb" />
        <rect x="16" y="28" width="25" height="25" rx="2.500" fill="#4549b8" />
        <text x="28.500" y="47" textAnchor="middle" fontFamily="Inter" fontWeight="700" fontSize="18" fill="#fff">T</text>
      </Tile>
    ),
  },
  {
    name: "Pages",
    icon: (
      <Tile id="pages" from="#ffb52c" to="#fd8b15">
        <path d="M24 62h38" stroke="#ffd29b" strokeWidth="2" />
        <path d="M19 62l3-9L52 23q6-5 9-3 1 4-4 9L28 57z" fill="#f6f5f3" />
        <path d="M38 39l4 4" stroke="#9a958e" strokeWidth="1.500" />
        <path d="M19 62l2-5 3 3z" fill="#5c4c3a" />
      </Tile>
    ),
  },
];

function DockItem({ name, running, icon }: { name: string; running?: boolean; icon: React.ReactNode }) {
  return (
    <li className="flex w-20 flex-col items-center">
      <button aria-label={name}>{icon}</button>
      <span className={running ? "mt-0.5 size-2 rounded-full bg-[#a39e8e]" : "mt-0.5 size-2"} />
    </li>
  );
}

function Dock() {
  return (
    <ul className="relative mx-[67px] mb-[11px] flex h-[101px] shrink-0 gap-5 rounded-[30px] border-2 border-[#4b463a] bg-linear-to-r from-[#1b1c14] via-[#33260f] to-[#3c2717] px-1 pt-1.5">
      <li className="flex-1">
        <ul className="flex justify-between">
          {apps.map((a) => (
            <DockItem key={a.name} {...a} />
          ))}
        </ul>
      </li>
      <li className="mt-1.5 h-[74px] w-0.5 bg-[#7a6854]" />
      <li>
        <ul className="flex gap-1">
          {extras.map((a) => (
            <DockItem key={a.name} {...a} />
          ))}
        </ul>
      </li>
      <li className="mt-1.5 h-[74px] w-0.5 bg-[#7a6854]" />
      <li>
        <ul className="flex gap-0.5">
          <DockItem
            name="Minimised document"
            icon={
              <svg viewBox="0 0 80 80" className="size-20">
                <rect x="3" y="18" width="74" height="44" fill="#fbfcfd" />
                <rect x="3" y="18" width="74" height="3" fill="#26313e" />
                <path d="M3 26.500h74" stroke="#4a6a86" strokeWidth="1" />
                <path d="M4 27v34" stroke="#3d8ccc" strokeWidth="2" />
                <path d="M18 31.500h47" stroke="#2489b5" strokeWidth="2.500" strokeDasharray="9 1.500" />
                <path d="M15 38.500h38M15 41h24M15 47h46M15 50h8M15 56h32M15 59h26" stroke="#8c8c8c" strokeWidth="1.200" strokeDasharray="5 1" />
                <path d="M15 44h38" stroke="#5567c8" strokeWidth="1.200" />
                <path d="M11.500 38.500v1.500M11.500 43.500v1.500M11.500 47.500v1.500M11.500 56v1.500" stroke="#c33" strokeWidth="2" />
                <rect x="52" y="53" width="22" height="23" rx="5" fill="#f0f2f5" />
                <path d="M54 58a3 3 0 0 1 3-3h12a3 3 0 0 1 3 3v6H54z" fill="#96b7ee" />
                <path d="M54 64h18v4H54z" fill="#2b4379" />
                <rect x="64" y="64" width="10" height="4" rx="1" fill="#111" />
                <path d="M65 68h8l2 8H63z" fill="#b9c0c6" />
              </svg>
            }
          />
          <DockItem
            name="Bin"
            icon={
              <svg viewBox="0 0 80 80" className="size-20">
                <defs>
                  <linearGradient id="bin" x1="0" y1="0" x2="1" y2="0">
                    <stop offset="0" stopColor="#6b7074" />
                    <stop offset=".4" stopColor="#93989c" />
                    <stop offset="1" stopColor="#5b5f63" />
                  </linearGradient>
                </defs>
                <path d="M12 11h56l-6 56q-1 8-22 8t-22-8z" fill="url(#bin)" />
                <ellipse cx="40" cy="12" rx="28" ry="5" fill="#4a4e51" />
                <path d="M16 13l3-7 9-3 6 4 7-5 8 2 6-2 6 6 3 5-8 4-14 2-16-1z" fill="#dddcda" />
                <path d="M26 8l6-3 4 6-7 3zM44 5l8 3-3 7-6-3z" fill="#3a3c45" />
                <path d="M34 10l7-3 2 5-6 3z" fill="#3cc4c9" />
                <path d="M51 9l5 4-6 3z" fill="#d4622e" />
                <path d="M12 12q6 6 28 6t28-6" stroke="#a9aeb1" strokeWidth="1.500" fill="none" />
              </svg>
            }
          />
        </ul>
      </li>
    </ul>
  );
}

/* Grassy wallpaper that shows around the dock */
function Wallpaper() {
  return (
    <svg className="absolute inset-x-0 bottom-0 h-[140px] w-full" preserveAspectRatio="none" aria-hidden="true">
      <defs>
        <filter id="grass" x="0" y="0" width="100%" height="100%">
          <feTurbulence type="fractalNoise" baseFrequency="0.07 0.045" numOctaves="4" seed="8" />
          <feColorMatrix values="0 0 0 0 .46  0 0 0 0 .34  0 0 0 0 .1  2.600 0 0 0 -1.150" />
        </filter>
        <linearGradient id="ground" x1="0" y1="0" x2="1" y2="0">
          <stop offset="0" stopColor="#0b0d05" />
          <stop offset=".3" stopColor="#1a1a0a" />
          <stop offset=".6" stopColor="#2b2410" />
          <stop offset="1" stopColor="#140d04" />
        </linearGradient>
        <linearGradient id="fade" x1="0" y1="0" x2="1" y2="0">
          <stop offset="0" stopColor="#fff" stopOpacity=".1" />
          <stop offset=".3" stopColor="#fff" stopOpacity=".35" />
          <stop offset=".6" stopColor="#fff" />
          <stop offset="1" stopColor="#fff" stopOpacity=".4" />
        </linearGradient>
        <mask id="grass-mask">
          <rect width="100%" height="100%" fill="url(#fade)" />
        </mask>
      </defs>
      <rect width="100%" height="100%" fill="url(#ground)" />
      <g mask="url(#grass-mask)">
        <rect width="100%" height="100%" filter="url(#grass)" />
      </g>
    </svg>
  );
}

export default function App() {
  return (
    <div className="relative flex h-screen flex-col overflow-hidden bg-[#cbc9c0]">
      <Wallpaper />
      <MenuBar />
      <div className="relative mb-1 mt-0.5 flex min-h-0 flex-1 flex-col overflow-hidden rounded-[20px] border-2 border-[#3c4046] border-t-[#727373] shadow-[0_0_0_1px_#000]">
        <Toolbar />
        <TabBar />
        <Page />
      </div>
      <Dock />
    </div>
  );
}
